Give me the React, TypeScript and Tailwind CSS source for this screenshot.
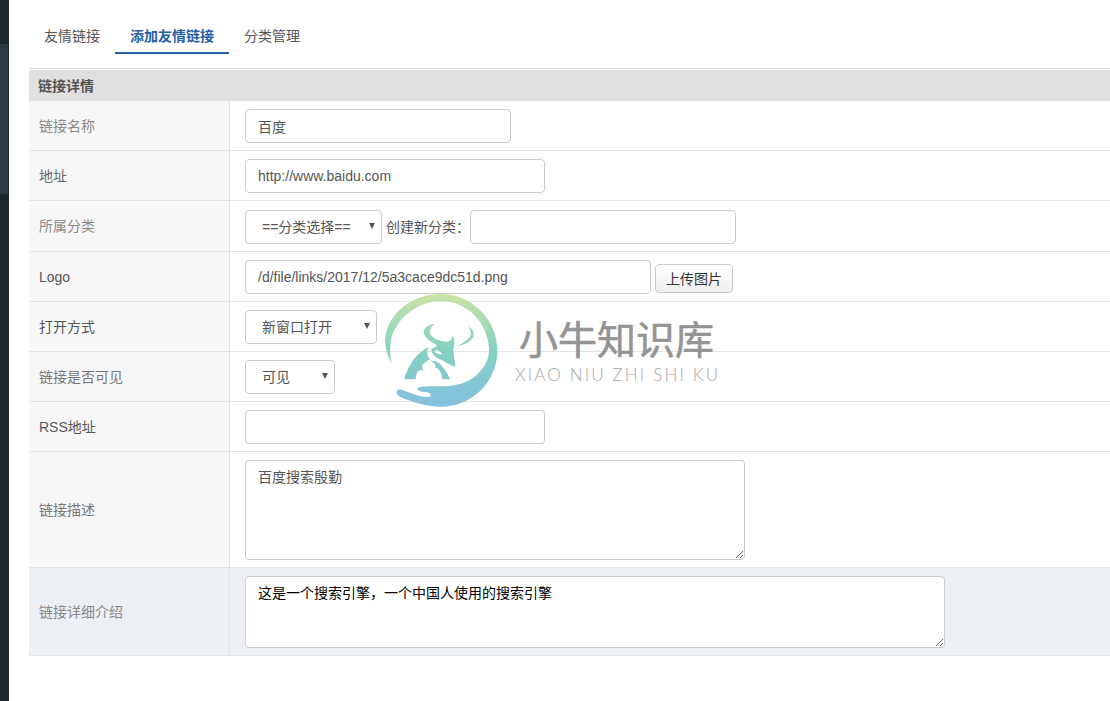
import React from "react";

function Row({
  label,
  color = "text-[#888]",
  height,
  top = "pt-2",
  bg = "",
  labelBg = "bg-[#f7f7f7]",
  children,
}: {
  label: string;
  color?: string;
  height: string;
  top?: string;
  bg?: string;
  labelBg?: string;
  children: React.ReactNode;
}) {
  return (
    <div className={`flex border-b border-[#e3e3e3] ${height} ${bg}`}>
      <div className={`flex w-[201px] shrink-0 items-center border-r border-[#e3e3e3] pl-[10px] text-sm ${labelBg} ${color}`}>
        {label}
      </div>
      <div className={`flex flex-1 items-start pl-[15px] ${top}`}>{children}</div>
    </div>
  );
}

const inputCls =
  "h-[34px] rounded border border-[#ccc] bg-white px-3 text-sm text-[#555] outline-none";

function Select({ width, text }: { width: string; text: string }) {
  return (
    <div className={`relative h-[34px] ${width}`}>
      <select
        defaultValue="a"
        className="h-[34px] w-full appearance-none rounded border border-[#ccc] bg-white pl-4 text-sm text-[#555] outline-none"
      >
        <option value="a">{text}</option>
      </select>
      <span className="pointer-events-none absolute top-[13px] right-[7px] h-0 w-0 border-x-[3px] border-t-[6px] border-x-transparent border-t-[#555]" />
    </div>
  );
}

function Logo() {
  return (
    <svg width="125" height="120" viewBox="0 0 375 360" className="block">
      <defs>
        <linearGradient id="g" gradientUnits="userSpaceOnUse" x1="0" y1="12" x2="0" y2="350">
          <stop offset="0" stopColor="#c6e3a0" />
          <stop offset="0.5" stopColor="#7ed0bf" />
          <stop offset="1" stopColor="#7fbce0" />
        </linearGradient>
      </defs>
      <g fill="url(#g)" fillRule="evenodd">
        <path d="M36 224 C20 190 12 165 17 135 C30 65 100 12 183 12 C275 12 352 88 352 182 C352 275 275 350 183 350 C145 350 100 338 60 320 C48 314 46 304 54 299 C62 296 80 305 100 312 C120 319 140 323 150 320 C156 312 150 307 135 306 C122 305 112 302 112 296 C114 290 135 289 170 289 C225 290 262 280 290 255 C315 232 328 205 327 178 C325 100 262 33 183 33 C110 33 45 90 33 150 C28 178 30 200 36 224 Z" />
        <path d="M165 101 C135 105 125 122 135 138 C145 152 160 160 172 165 C167 172 160 175 153 177 C156 192 165 202 180 208 C192 212 206 226 226 230 C226 215 220 195 220 178 C224 165 225 150 218 135 C216 148 210 155 200 155 C185 155 165 148 155 138 C145 125 150 112 165 101 Z M162 183 C170 178 180 182 187 193 C177 194 168 190 162 183 Z" />
        <path d="M265 110 C278 116 284 128 280 140 C274 155 250 165 232 168 C248 160 268 148 272 136 C274 126 270 118 265 110 Z" />
        <path d="M147 170 C108 188 84 228 72 268 L107 268 C108 245 122 222 150 208 C140 195 140 182 147 170 Z" />
        <path d="M152 212 C174 207 196 235 211 268 L186 268 C186 250 178 236 165 232 C170 224 162 217 152 212 Z" />
        <path d="M128 222 C116 226 110 236 112 246 C118 240 124 240 130 243 C127 236 126 228 128 222 Z" />
      </g>
    </svg>
  );
}

export default function App() {
  return (
    <div className="relative flex h-[701px] w-[1110px] overflow-hidden bg-white font-['Liberation_Sans','Noto_Sans_CJK_SC',sans-serif]">
      <div className="flex h-full w-[9px] shrink-0 flex-col bg-[#1e282c]">
        <div className="h-[44px]" />
        <div className="h-[150px] w-[8px] bg-[#2c3b41]" />
      </div>
      <div className="ml-[20px] flex-1 pt-4">
        <div className="flex h-[38px]">
          <div className="h-[38px] px-[15px] pt-2.5 text-sm leading-5 text-[#555]">友情链接</div>
          <div className="h-[38px] border-b-2 border-[#2661a8] px-[15px] pt-2.5 text-sm leading-5 font-bold text-[#2661a8]">添加友情链接</div>
          <div className="h-[38px] px-[15px] pt-2.5 text-sm leading-5 text-[#555]">分类管理</div>
        </div>
        <div className="mt-[14px] h-[2px] border-t border-[#ddd]" />
        <div className="flex h-[31px] items-center bg-[#e0e0e0] pl-[9px] text-sm font-bold text-[#555]">链接详情</div>
        <Row label="链接名称" height="h-[50px]">
          <input readOnly value="百度" className={`${inputCls} w-[266px]`} />
        </Row>
        <Row label="地址" color="text-[#666]" height="h-[50px]">
          <input readOnly value="http://www.baidu.com" className={`${inputCls} w-[300px]`} />
        </Row>
        <Row label="所属分类" height="h-[51px]" top="pt-[9px]">
          <Select width="w-[137px]" text="==分类选择==" />
          <span className="ml-1 text-sm leading-[34px] text-[#555]">创建新分类：</span>
          <input readOnly className={`${inputCls} w-[266px]`} />
        </Row>
        <Row label="Logo" color="text-[#555]" height="h-[50px]">
          <input readOnly value="/d/file/links/2017/12/5a3cace9dc51d.png" className={`${inputCls} w-[406px]`} />
          <button className="mt-1 ml-1 h-[29px] w-[78px] rounded-sm border border-[#ccc] bg-gradient-to-b from-white to-[#efefef] text-sm text-[#333]">上传图片</button>
        </Row>
        <Row label="打开方式" color="text-[#555]" height="h-[50px]">
          <Select width="w-[132px]" text="新窗口打开" />
        </Row>
        <Row label="链接是否可见" color="text-[#777]" height="h-[50px]">
          <Select width="w-[90px]" text="可见" />
        </Row>
        <Row label="RSS地址" color="text-[#555]" height="h-[50px]">
          <input readOnly className={`${inputCls} w-[300px]`} />
        </Row>
        <Row label="链接描述" color="text-[#777]" height="h-[116px]">
          <textarea readOnly value="百度搜索殷勤" className="h-[100px] w-[500px] rounded border border-[#ccc] bg-white px-3 py-1.5 text-sm text-[#555] outline-none" />
        </Row>
        <Row label="链接详细介绍" height="h-[88px]" bg="bg-[#ecf0f4]" labelBg="bg-[#ecf0f4]">
          <textarea readOnly value="这是一个搜索引擎，一个中国人使用的搜索引擎" className="h-[72px] w-[700px] rounded border border-[#ccc] bg-white px-3 py-1.5 text-sm text-black outline-none" />
        </Row>
      </div>
      <div className="pointer-events-none absolute top-[290px] left-[380px] flex items-start opacity-95">
        <Logo />
        <div className="ml-[13px] flex flex-col">
          <span className="mt-[27px] ml-[1px] h-[48px] text-[39px] leading-[48px] whitespace-nowrap text-[#8f8f8f] [-webkit-text-stroke:0.6px_#8f8f8f]">小牛知识库</span>
          <span className="-ml-[3px] text-[17px] leading-5 font-['Lato',sans-serif] font-light tracking-[2.15px] whitespace-nowrap text-[#a3a3a3]">XIAO NIU ZHI SHI KU</span>
        </div>
      </div>
    </div>
  );
}
